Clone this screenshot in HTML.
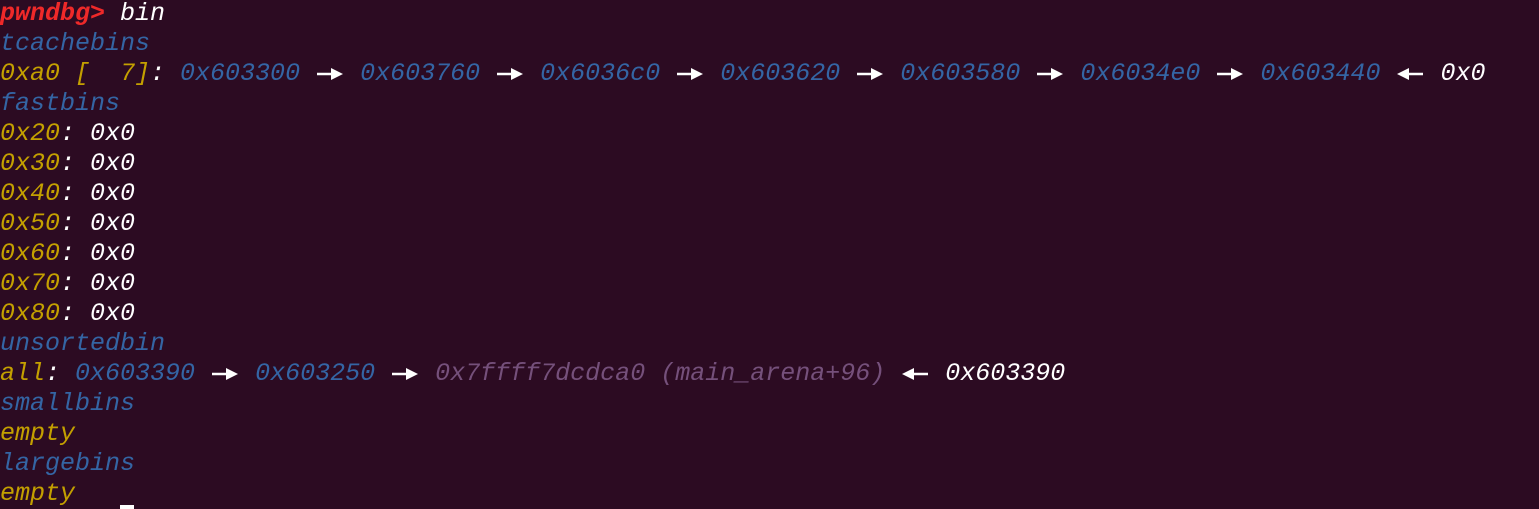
<!DOCTYPE html>
<html><head><meta charset="utf-8"><style>
html,body{margin:0;padding:0;background:#2c0b22;width:1539px;height:509px;overflow:hidden}
pre{margin:0;padding:0;position:relative;top:-1px;font-family:"Liberation Mono","DejaVu Sans Mono",monospace;font-style:italic;font-size:25px;line-height:30px;color:#fff;white-space:pre}
.r{color:#ef2929;font-weight:bold}.b{color:#3465a4}.y{color:#c4a000}.p{color:#75507b}
.a{display:inline-block;width:30px;height:30px;vertical-align:top}
.cur{position:absolute;left:120px;top:505px;width:14px;height:4px;background:#fff}
</style></head><body>
<pre><span class="r">pwndbg&gt;</span> bin
<span class="b">tcachebins</span>
<span class="y">0xa0 [  7]</span>: <span class="b">0x603300</span> <svg class="a"><path d="M2 15H17" stroke="#fff" stroke-width="2.5"/><path d="M16 9L28 15L16 21Z" fill="#fff"/></svg> <span class="b">0x603760</span> <svg class="a"><path d="M2 15H17" stroke="#fff" stroke-width="2.5"/><path d="M16 9L28 15L16 21Z" fill="#fff"/></svg> <span class="b">0x6036c0</span> <svg class="a"><path d="M2 15H17" stroke="#fff" stroke-width="2.5"/><path d="M16 9L28 15L16 21Z" fill="#fff"/></svg> <span class="b">0x603620</span> <svg class="a"><path d="M2 15H17" stroke="#fff" stroke-width="2.5"/><path d="M16 9L28 15L16 21Z" fill="#fff"/></svg> <span class="b">0x603580</span> <svg class="a"><path d="M2 15H17" stroke="#fff" stroke-width="2.5"/><path d="M16 9L28 15L16 21Z" fill="#fff"/></svg> <span class="b">0x6034e0</span> <svg class="a"><path d="M2 15H17" stroke="#fff" stroke-width="2.5"/><path d="M16 9L28 15L16 21Z" fill="#fff"/></svg> <span class="b">0x603440</span> <svg class="a"><path d="M13 15H28" stroke="#fff" stroke-width="2.5"/><path d="M14 9L2 15L14 21Z" fill="#fff"/></svg> 0x0
<span class="b">fastbins</span>
<span class="y">0x20</span>: 0x0
<span class="y">0x30</span>: 0x0
<span class="y">0x40</span>: 0x0
<span class="y">0x50</span>: 0x0
<span class="y">0x60</span>: 0x0
<span class="y">0x70</span>: 0x0
<span class="y">0x80</span>: 0x0
<span class="b">unsortedbin</span>
<span class="y">all</span>: <span class="b">0x603390</span> <svg class="a"><path d="M2 15H17" stroke="#fff" stroke-width="2.5"/><path d="M16 9L28 15L16 21Z" fill="#fff"/></svg> <span class="b">0x603250</span> <svg class="a"><path d="M2 15H17" stroke="#fff" stroke-width="2.5"/><path d="M16 9L28 15L16 21Z" fill="#fff"/></svg> <span class="p">0x7ffff7dcdca0 (main_arena+96)</span> <svg class="a"><path d="M13 15H28" stroke="#fff" stroke-width="2.5"/><path d="M14 9L2 15L14 21Z" fill="#fff"/></svg> 0x603390
<span class="b">smallbins</span>
<span class="y">empty</span>
<span class="b">largebins</span>
<span class="y">empty</span></pre>
<div class="cur"></div>
</body></html>
